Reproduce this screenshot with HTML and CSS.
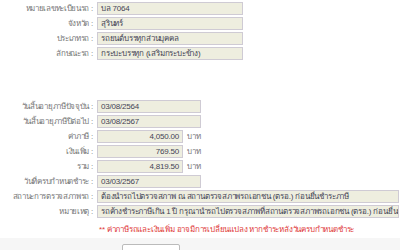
FILE: index.html
```html
<!DOCTYPE html>
<html lang="th">
<head>
    <meta charset="UTF-8">
    <title>ผลการตรวจสอบภาษีรถ</title>
    <link rel="stylesheet" href="styles.css">
</head>
<body>
    <div class="form">
        <!-- ข้อมูลรถ -->
        <div class="group">
            <div class="row"><span class="lbl">หมายเลขทะเบียนรถ :</span><span class="box w-md">บล 7064</span></div>
            <div class="row"><span class="lbl">จังหวัด :</span><span class="box w-md">สุรินทร์</span></div>
            <div class="row"><span class="lbl">ประเภทรถ :</span><span class="box w-md">รถยนต์บรรทุกส่วนบุคคล</span></div>
            <div class="row"><span class="lbl">ลักษณะรถ :</span><span class="box w-md">กระบะบรรทุก (เสริมกระบะข้าง)</span></div>
        </div>

        <!-- ข้อมูลภาษี -->
        <div class="group tax">
            <div class="row"><span class="lbl">วันสิ้นอายุภาษีปัจจุบัน :</span><span class="box w-date">03/08/2564</span></div>
            <div class="row"><span class="lbl">วันสิ้นอายุภาษีปีต่อไป :</span><span class="box w-date">03/08/2567</span></div>
            <div class="row"><span class="lbl">ค่าภาษี :</span><span class="box w-num">4,050.00</span><span class="unit">บาท</span></div>
            <div class="row"><span class="lbl">เงินเพิ่ม :</span><span class="box w-num">769.50</span><span class="unit">บาท</span></div>
            <div class="row"><span class="lbl">รวม :</span><span class="box w-num">4,819.50</span><span class="unit">บาท</span></div>
            <div class="row"><span class="lbl">วันที่ครบกำหนดชำระ :</span><span class="box w-date">03/03/2567</span></div>
            <div class="row"><span class="lbl">สถานะการตรวจสภาพรถ :</span><span class="box w-full">ต้องนำรถไปตรวจสภาพ ณ สถานตรวจสภาพรถเอกชน (ตรอ.) ก่อนยื่นชำระภาษี</span></div>
            <div class="row"><span class="lbl">หมายเหตุ :</span><span class="box w-full">รถค้างชำระภาษีเกิน 1 ปี กรุณานำรถไปตรวจสภาพที่สถานตรวจสภาพรถเอกชน (ตรอ.) ก่อนยื่นชำระภาษี</span></div>
            <div class="row note-row"><span class="lbl"></span><span class="note">** ค่าภาษีรถและเงินเพิ่ม อาจมีการเปลี่ยนแปลง หากชำระหลังวันครบกำหนดชำระ</span></div>
        </div>
    </div>

    <div class="footer">
        <button class="btn" aria-label="ย้อนกลับ"></button>
    </div>
</body>
</html>
```

FILE: styles.css
```css
body {margin: 0; font-family: "Liberation Sans", sans-serif; font-size: 8px; color: #666; background: #fff}
.form {padding-top: 2px; height: 236px}
.group {display: flex; flex-direction: column; gap: 2px}
.tax {margin-top: 40px}
.row {display: flex; align-items: center; height: 13px}
.lbl {width: 93px; flex: none; text-align: right; padding-right: 4px; white-space: nowrap; color: #777; letter-spacing: -0.3px}
.box {height: 11px; line-height: 11px; padding: 0 3px; background: #eeeedf; border: 1px solid #cfcbd4;
      color: #445; white-space: nowrap; overflow: hidden; letter-spacing: -0.2px}
.w-md {width: 138px}
.w-date {width: 96px}
.w-num {width: 78px; text-align: right}
.w-full {width: 294px}
.unit {margin-left: 4px; color: #777}
.note-row {height: 18px}
.note {color: #e03a3a; padding-left: 2px; white-space: nowrap; letter-spacing: -0.2px}
.footer {background: #f6f6f6; height: 14px; padding-left: 122px; padding-top: 6px}
.btn {display: block; width: 58px; height: 14px; background: #fff; border: 1px solid #bbb; border-radius: 2px}
```
